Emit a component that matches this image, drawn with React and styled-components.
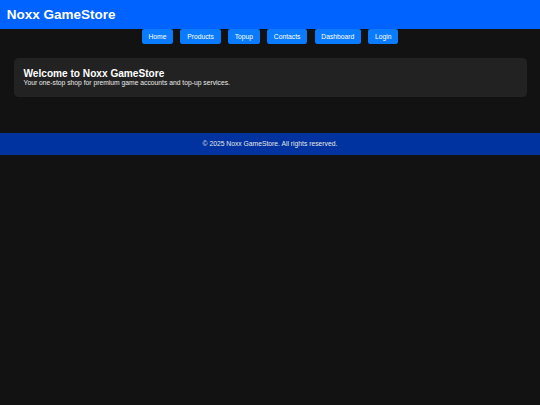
import React from "react";
import styled, { createGlobalStyle } from "styled-components";

const links = ["Home", "Products", "Topup", "Contacts", "Dashboard", "Login"];

export default function App() {
  return (
    <>
      <GlobalStyle />
      <Header>
        <Brand>Noxx GameStore</Brand>
      </Header>
      <Nav>
        {links.map((l) => (
          <NavButton key={l} href="#">
            {l}
          </NavButton>
        ))}
      </Nav>
      <Main>
        <Card>
          <Title>Welcome to Noxx GameStore</Title>
          <Lead>Your one-stop shop for premium game accounts and top-up services.</Lead>
        </Card>
      </Main>
      <Footer>© 2025 Noxx GameStore. All rights reserved.</Footer>
    </>
  );
}

// === Styles ===
const GlobalStyle = createGlobalStyle`
  html, body {
    margin: 0;
    padding: 0;
    background: #121212;
    color: #ffffff;
    font-family: "Liberation Sans", Arial, sans-serif;
  }
`;

const Header = styled.header`
  background-color: #0062ff;
  padding: 6.75px;
`;

const Brand = styled.h1`
  margin: 0;
  font-size: 13.5px;
  line-height: 15.5px;
  font-weight: bold;
  color: #fff;
`;

const Nav = styled.nav`
  display: flex;
  justify-content: center;
  gap: 7.3px;
`;

const NavButton = styled.a`
  display: block;
  background-color: #0a7bff;
  color: #fff;
  text-decoration: none;
  font-size: 6.75px;
  line-height: 8px;
  padding: 3.5px 6.75px;
  border-radius: 2.25px;
`;

const Main = styled.main`
  padding: 13.5px;
`;

const Card = styled.section`
  background-color: #222222;
  border-radius: 4.5px;
  padding: 10px;
`;

const Title = styled.h2`
  margin: 0;
  font-size: 10.125px;
  line-height: 11.6px;
  font-weight: bold;
`;

const Lead = styled.p`
  margin: 0;
  font-size: 6.75px;
  line-height: 7.8px;
  color: #eaeaea;
`;

const Footer = styled.footer`
  margin-top: 23px;
  background-color: #0033a0;
  text-align: center;
  font-size: 6.75px;
  line-height: 7.8px;
  padding: 6.75px;
  color: #e6e6e6;
`;
